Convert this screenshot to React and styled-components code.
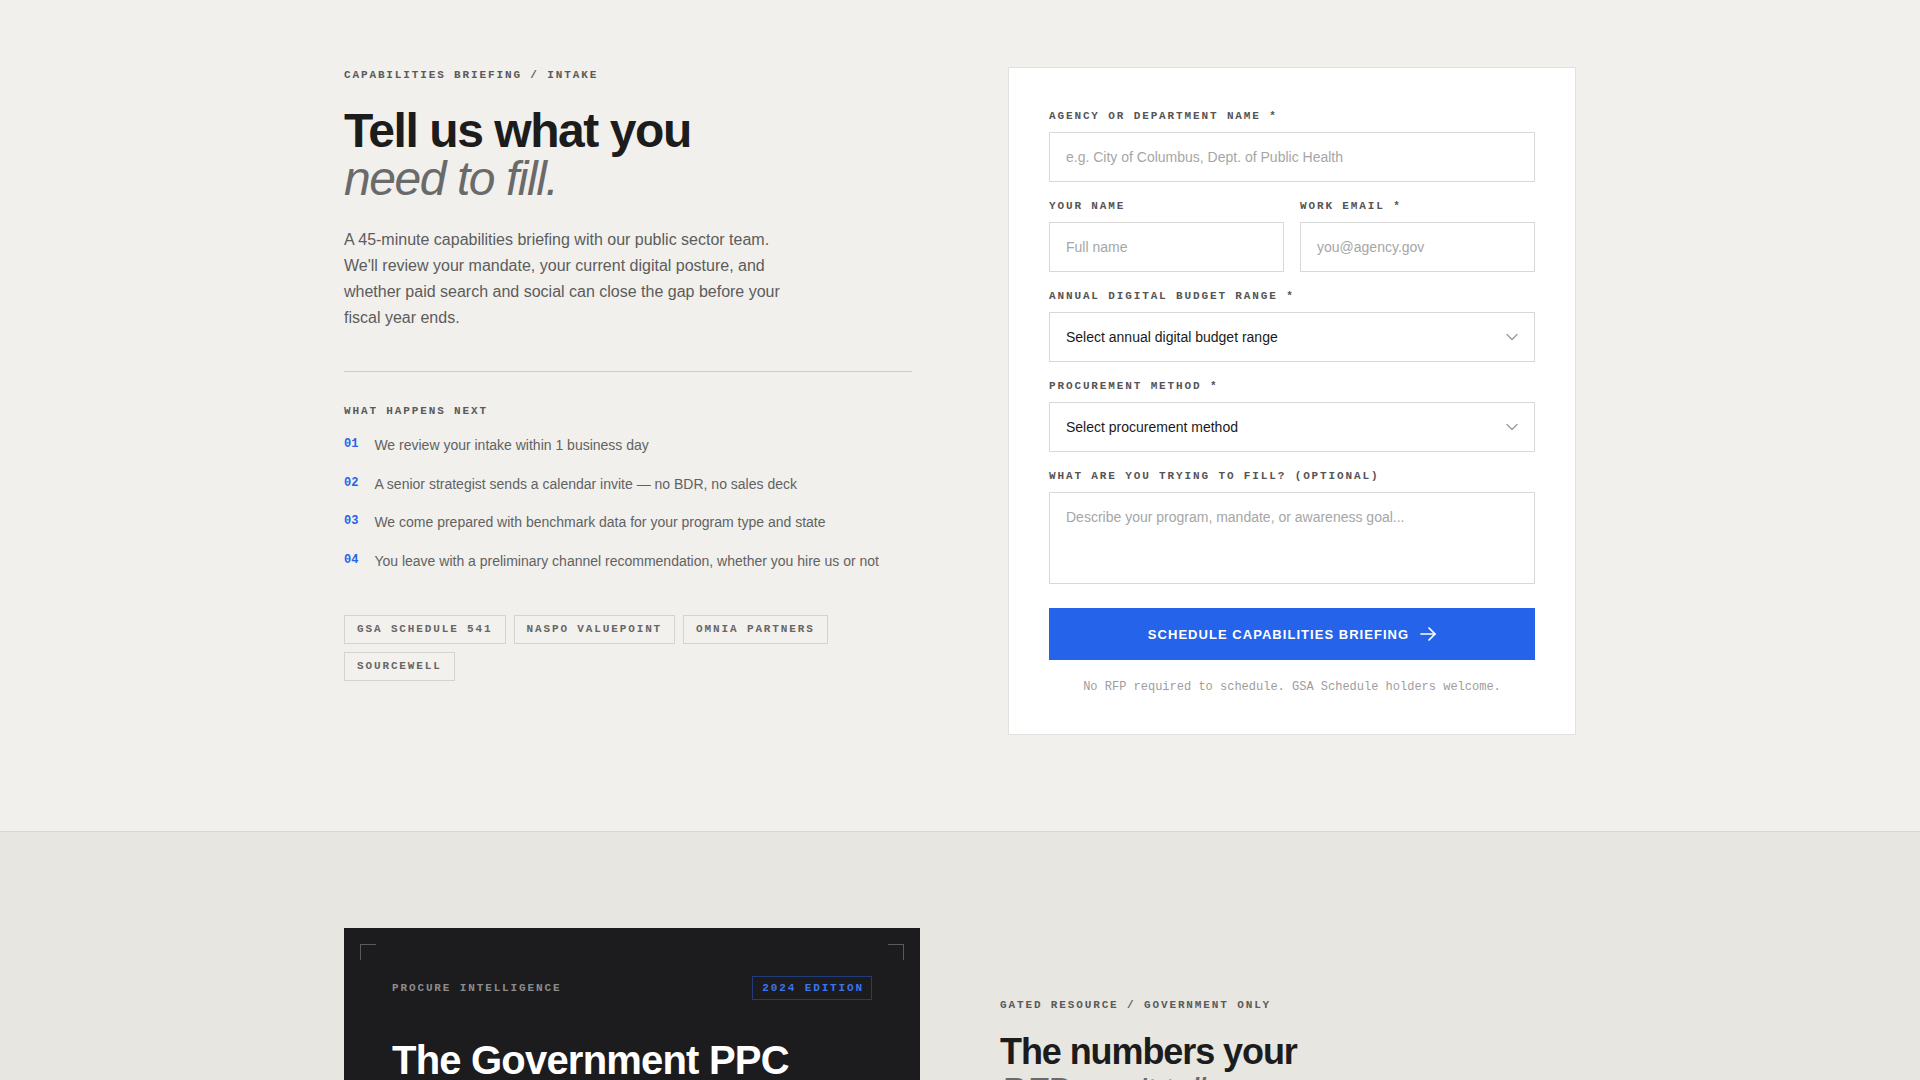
import React from "react"
import styled, { createGlobalStyle } from "styled-components"
import { ChevronDown } from "lucide-react"

const sans = `"Liberation Sans", Arial, Helvetica, sans-serif`
const mono = `"Liberation Mono", "Courier New", monospace`

const GlobalStyle = createGlobalStyle`
  html, body {
    margin: 0;
    padding: 0;
    background: #f1f0ec;
    font-family: ${sans};
    color: #1a1a1a;
  }
  * { box-sizing: border-box; }
`

const IntakeSection = styled.section`
  background: #f1f0ec;
  padding: 67px 0 96px;
`

const Container = styled.div`
  width: 1232px;
  margin: 0 auto;
  display: grid;
  grid-template-columns: ${p => p.$cols || "568px 568px"};
  column-gap: ${p => p.$gap || "96px"};
  align-items: start;
`

const Column = styled.div`
  display: flex;
  flex-direction: column;
  padding-top: ${p => p.$offset || "0"};
`

const Eyebrow = styled.div`
  font-family: ${mono};
  font-size: 11px;
  line-height: 16px;
  font-weight: 700;
  letter-spacing: 0.17em;
  text-transform: uppercase;
  color: ${p => p.$dark ? "#8c8c8c" : "#5a5a5a"};
`

const Headline = styled.h1`
  margin: 24px 0 24px;
  font-size: 48px;
  line-height: 1;
  letter-spacing: -0.03em;
  font-weight: 700;
  color: #1c1c1c;
`

const SubHeadline = styled.h2`
  margin: 19px 0 0;
  font-size: 36px;
  line-height: 1.1;
  letter-spacing: -0.03em;
  font-weight: 700;
  color: #1c1c1c;
`

const Soft = styled.span`
  display: block;
  font-style: italic;
  font-weight: 400;
  color: #6a6a6a;
`

const Lead = styled.p`
  margin: ${p => p.$top || "0"} 0 0;
  max-width: 440px;
  font-size: 16px;
  line-height: 26px;
  color: #5c5c5c;
`

const Divider = styled.hr`
  margin: 40px 0 31px;
  border: 0;
  border-top: 1px solid #cfcdc7;
  width: 100%;
`

const Steps = styled.ol`
  list-style: none;
  margin: 16px 0 0;
  padding: 0;
  display: flex;
  flex-direction: column;
  gap: 17.5px;
`

const Step = styled.li`
  display: flex;
  align-items: flex-start;
  gap: 16px;
  font-size: 14px;
  line-height: 21px;
  color: #626262;
`

const StepNum = styled.span`
  font-family: ${mono};
  font-size: 12px;
  line-height: 18px;
  font-weight: 700;
  color: #2563eb;
  min-width: 14px;
`

const Tags = styled.div`
  margin-top: 43px;
  display: flex;
  flex-wrap: wrap;
  gap: 8px;
  max-width: 500px;
`

const Tag = styled.span`
  font-family: ${mono};
  font-size: 11px;
  line-height: 15px;
  font-weight: 700;
  letter-spacing: 0.17em;
  color: #666;
  padding: 6px 12px;
  border: 1px solid #d5d3cd;
  background: #f2f1ed;
`

const FormCard = styled.form`
  background: #fff;
  border: 1px solid #e3e1db;
  padding: 40px 40px 38px;
  display: flex;
  flex-direction: column;
  gap: 16px;
`

const Row = styled.div`
  display: grid;
  grid-template-columns: 1fr 1fr;
  gap: 16px;
`

const Field = styled.label`
  display: flex;
  flex-direction: column;
  gap: 8px;
`

const FieldLabel = styled.span`
  font-family: ${mono};
  font-size: 11px;
  line-height: 16px;
  font-weight: 700;
  letter-spacing: 0.17em;
  text-transform: uppercase;
  color: #555;
`

const controlBase = `
  width: 100%;
  font-family: ${sans};
  font-size: 14px;
  line-height: 18px;
  color: #1a1a1a;
  background: #fff;
  border: 1px solid #d8d8d8;
  border-radius: 0;
  padding: 15px 16px;
  outline: none;
  &::placeholder { color: #a6a6a6; }
`

const Input = styled.input`
  ${controlBase}
  height: 50px;
`

const TextArea = styled.textarea`
  ${controlBase}
  height: 92px;
  resize: none;
`

const SelectWrap = styled.div`
  position: relative;
`

const Select = styled.select`
  ${controlBase}
  height: 50px;
  appearance: none;
  -webkit-appearance: none;
  padding-right: 44px;
`

const SelectIcon = styled(ChevronDown)`
  position: absolute;
  right: 13px;
  top: 50%;
  transform: translateY(-50%);
  color: #999;
  pointer-events: none;
`

const SubmitButton = styled.button`
  margin-top: 8px;
  height: 52px;
  border: 0;
  background: #2563eb;
  color: #fff;
  font-family: ${sans};
  font-size: 13px;
  font-weight: 700;
  letter-spacing: 0.08em;
  text-transform: uppercase;
  display: flex;
  align-items: center;
  justify-content: center;
  gap: 11px;
  cursor: pointer;
`

const Footnote = styled.p`
  margin: 2px 0 0;
  text-align: center;
  font-family: ${mono};
  font-size: 12px;
  line-height: 18px;
  color: #9d9d9d;
`

const ResourceSection = styled.section`
  background: #e7e6e1;
  border-top: 1px solid #d9d7d1;
  padding: 96px 0 96px;
`

const ReportCard = styled.div`
  position: relative;
  background: #1c1c1e;
  padding: 48px 48px 56px;
  color: #fff;
`

const Corner = styled.span`
  position: absolute;
  top: 16px;
  ${p => p.$side}: 16px;
  width: 16px;
  height: 16px;
  border-top: 1px solid #5a5a5c;
  ${p => p.$side === "left" ? "border-left" : "border-right"}: 1px solid #5a5a5c;
`

const ReportHeader = styled.div`
  display: flex;
  justify-content: space-between;
  align-items: center;
`

const Edition = styled.span`
  font-family: ${mono};
  font-size: 11px;
  line-height: 12px;
  font-weight: 700;
  letter-spacing: 0.17em;
  color: #3a74f0;
  padding: 5px 7px 5px 9px;
  border: 1px solid rgba(37, 99, 235, 0.45);
`

const ReportTitle = styled.h3`
  margin: 38px 0 0;
  font-size: 40px;
  line-height: 1.1;
  letter-spacing: -0.02em;
  font-weight: 700;
  color: #fff;
`

const ReportText = styled.p`
  margin: 20px 0 0;
  font-size: 15px;
  line-height: 24px;
  color: #a5a5a8;
`

const ArrowIcon = () => (
  <svg width="16" height="14" viewBox="0 0 16 14" fill="none" stroke="currentColor" strokeWidth="1.7" strokeLinecap="round" strokeLinejoin="round">
    <path d="M1 7h14" />
    <path d="M9 1l6 6-6 6" />
  </svg>
)

const steps = [
  "We review your intake within 1 business day",
  "A senior strategist sends a calendar invite — no BDR, no sales deck",
  "We come prepared with benchmark data for your program type and state",
  "You leave with a preliminary channel recommendation, whether you hire us or not",
]

const vehicles = ["GSA SCHEDULE 541", "NASPO VALUEPOINT", "OMNIA PARTNERS", "SOURCEWELL"]

export default function App() {
  return (
    <>
      <GlobalStyle />
      <IntakeSection>
        <Container>
          <Column>
            <Eyebrow>Capabilities briefing / intake</Eyebrow>
            <Headline>
              Tell us what you
              <Soft>need to fill.</Soft>
            </Headline>
            <Lead>
              A 45-minute capabilities briefing with our public sector team. We'll review your
              mandate, your current digital posture, and whether paid search and social can close
              the gap before your fiscal year ends.
            </Lead>
            <Divider />
            <Eyebrow>What happens next</Eyebrow>
            <Steps>
              {steps.map((s, i) => (
                <Step key={i}>
                  <StepNum>{String(i + 1).padStart(2, "0")}</StepNum>
                  <span>{s}</span>
                </Step>
              ))}
            </Steps>
            <Tags>
              {vehicles.map(v => <Tag key={v}>{v}</Tag>)}
            </Tags>
          </Column>

          <FormCard onSubmit={e => e.preventDefault()}>
            <Field>
              <FieldLabel>Agency or department name *</FieldLabel>
              <Input placeholder="e.g. City of Columbus, Dept. of Public Health" />
            </Field>
            <Row>
              <Field>
                <FieldLabel>Your name</FieldLabel>
                <Input placeholder="Full name" />
              </Field>
              <Field>
                <FieldLabel>Work email *</FieldLabel>
                <Input placeholder="you@agency.gov" />
              </Field>
            </Row>
            <Field>
              <FieldLabel>Annual digital budget range *</FieldLabel>
              <SelectWrap>
                <Select defaultValue="">
                  <option value="">Select annual digital budget range</option>
                  <option>Under $50K</option>
                  <option>$50K – $250K</option>
                  <option>$250K – $1M</option>
                  <option>$1M+</option>
                </Select>
                <SelectIcon size={20} strokeWidth={1.5} />
              </SelectWrap>
            </Field>
            <Field>
              <FieldLabel>Procurement method *</FieldLabel>
              <SelectWrap>
                <Select defaultValue="">
                  <option value="">Select procurement method</option>
                  <option>GSA Schedule</option>
                  <option>Cooperative contract</option>
                  <option>RFP / RFQ</option>
                  <option>Micro-purchase</option>
                </Select>
                <SelectIcon size={20} strokeWidth={1.5} />
              </SelectWrap>
            </Field>
            <Field>
              <FieldLabel>What are you trying to fill? (optional)</FieldLabel>
              <TextArea placeholder="Describe your program, mandate, or awareness goal..." />
            </Field>
            <SubmitButton type="submit">
              Schedule capabilities briefing
              <ArrowIcon />
            </SubmitButton>
            <Footnote>No RFP required to schedule. GSA Schedule holders welcome.</Footnote>
          </FormCard>
        </Container>
      </IntakeSection>

      <ResourceSection>
        <Container $cols="576px 576px" $gap="80px">
          <ReportCard>
            <Corner $side="left" />
            <Corner $side="right" />
            <ReportHeader>
              <Eyebrow $dark>Procure intelligence</Eyebrow>
              <Edition>2024 EDITION</Edition>
            </ReportHeader>
            <ReportTitle>The Government PPC Benchmark Report</ReportTitle>
            <ReportText>
              Cost-per-click, conversion and awareness benchmarks across 40+ public sector
              program types, drawn from real agency campaigns.
            </ReportText>
          </ReportCard>
          <Column $offset="69px">
            <Eyebrow>Gated resource / government only</Eyebrow>
            <SubHeadline>
              The numbers your
              <Soft>RFP won't tell you.</Soft>
            </SubHeadline>
            <Lead $top="24px">
              Benchmarks by agency type, state and channel, so you can size a program before
              the procurement cycle starts.
            </Lead>
          </Column>
        </Container>
      </ResourceSection>
    </>
  )
}
